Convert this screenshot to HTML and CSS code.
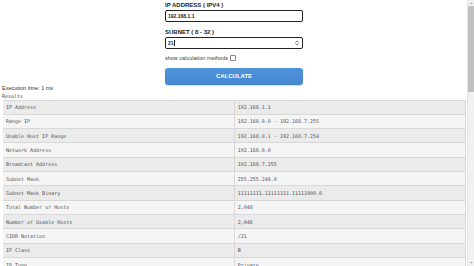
FILE: index.html
```html
<!DOCTYPE html>
<html>
<head>
<meta charset="utf-8">
<link rel="stylesheet" href="styles.css">
</head>
<body>
<div class="page">
  <form class="form">
    <label class="label">IP ADDRESS ( IPV4 )</label>
    <div class="field"><span class="value">192.168.1.1</span></div>
    <label class="label label-second">SUBNET ( 8 - 32 )</label>
    <div class="field field-select"><span class="value">21<span class="caret"></span></span>
      <svg class="spin" width="4" height="6" viewBox="0 0 4 6"><path d="M0.5 2.5 L2 1 L3.5 2.5 M0.5 3.5 L2 5 L3.5 3.5" fill="none" stroke="#555" stroke-width="0.8"/></svg>
    </div>
    <div class="check-row"><span>show calculation methods</span><span class="checkbox"></span></div>
    <div class="button">CALCULATE</div>
  </form>
  <div class="exec">Execution time: 1 ms</div>
  <div class="results-title">Results</div>
  <table class="results">
    <tr><td>IP Address</td><td>192.168.1.1</td></tr>
    <tr><td>Range IP</td><td>192.168.0.0 - 192.168.7.255</td></tr>
    <tr><td>Usable Host IP Range</td><td>192.168.0.1 - 192.168.7.254</td></tr>
    <tr><td>Network Address</td><td>192.168.0.0</td></tr>
    <tr><td>Broadcast Address</td><td>192.168.7.255</td></tr>
    <tr><td>Subnet Mask</td><td>255.255.248.0</td></tr>
    <tr><td>Subnet Mask Binary</td><td>11111111.11111111.11111000.0</td></tr>
    <tr><td>Total Number of Hosts</td><td>2,048</td></tr>
    <tr><td>Number of Usable Hosts</td><td>2,046</td></tr>
    <tr><td>CIDR Notation</td><td>/21</td></tr>
    <tr><td>IP Class</td><td>B</td></tr>
    <tr><td>IP Type</td><td>Private</td></tr>
  </table>
</div>
<div class="scrollbar">
  <svg class="sb-arrow" width="7" height="6" viewBox="0 0 7 6"><path d="M2 4 L3.5 2.5 L5 4 Z" fill="#a0a0a0"/></svg>
  <div class="sb-track"><div class="sb-thumb"></div></div>
  <svg class="sb-arrow" width="7" height="6" viewBox="0 0 7 6"><path d="M2 2 L3.5 3.5 L5 2 Z" fill="#a0a0a0"/></svg>
</div>
</body>
</html>
```
FILE: styles.css
```css
body {
  margin: 0;
  font-family: "Liberation Sans", Arial, sans-serif;
  color: #333;
  overflow: hidden;
}
.page {
  padding: 0 8px 0 2px;
}
.form {
  width: 138px;
  margin: 0 auto;
  padding-top: 1px;
  display: flex;
  flex-direction: column;
}
.label {
  font-weight: bold;
  font-size: 6px;
  line-height: 8px;
  height: 8px;
  color: #222;
}
.label-second {
  margin-top: 6px;
}
.field {
  margin-top: 1px;
  height: 12px;
  box-sizing: border-box;
  border: 1px solid #222;
  border-radius: 2px;
  display: flex;
  align-items: center;
  justify-content: space-between;
  padding: 0 3px 0 2px;
  background: #fff;
}
.value {
  font-size: 5px;
  font-weight: bold;
  color: #222;
  display: flex;
  align-items: center;
}
.caret {
  display: inline-block;
  width: 0.6px;
  height: 6px;
  background: #222;
  margin-left: 0.5px;
}
.spin {
  display: block;
}
.check-row {
  margin-top: 5px;
  height: 8px;
  display: flex;
  align-items: center;
  gap: 2px;
  font-size: 5.5px;
  color: #444;
}
.checkbox {
  width: 6px;
  height: 6px;
  box-sizing: border-box;
  border: 1px solid #888;
  border-radius: 1px;
  background: #fff;
}
.button {
  margin-top: 6px;
  height: 16.5px;
  border-radius: 3px;
  background: linear-gradient(#4f95db, #4686cf);
  color: #fff;
  font-weight: bold;
  font-size: 6px;
  display: flex;
  align-items: center;
  justify-content: center;
  box-shadow: 0 1px 1px rgba(0,0,0,0.15);
}
.exec {
  margin-top: 0;
  font-size: 5.5px;
  line-height: 7px;
  color: #333;
}
.results-title {
  font-family: "DejaVu Sans Mono", monospace;
  font-size: 5px;
  line-height: 8px;
  color: #444;
}
.results {
  width: calc(100% - 1px);
  margin-left: 1px;
  border-collapse: collapse;
  font-family: "DejaVu Sans Mono", monospace;
  font-size: 5px;
  color: #555;
  border-right: 1px solid #c8c8c8;
}
.results td {
  height: 14.33px;
  box-sizing: border-box;
  padding: 0 2px 0 3px;
  border-top: 1px solid #d8d8d8;
  border-bottom: 1px solid #d8d8d8;
  border-right: 1px solid #d8d8d8;
  width: 50%;
  vertical-align: middle;
}
.results tr:nth-child(odd) td {
  background: #ebebeb;
}
.results tr:nth-child(even) td {
  background: #f5f5f5;
}
.scrollbar {
  position: fixed;
  top: 0;
  right: 0;
  width: 7px;
  height: 100%;
  box-sizing: border-box;
  background: #f1f1f1;
  border-left: 1px solid #e4e4e4;
  display: flex;
  flex-direction: column;
}
.sb-arrow {
  display: block;
  flex: none;
}
.sb-track {
  flex: 1;
  padding: 0 0 0 0;
}
.sb-thumb {
  height: 86px;
  margin: 0 0 0 0;
  background: #c1c1c1;
}
```
